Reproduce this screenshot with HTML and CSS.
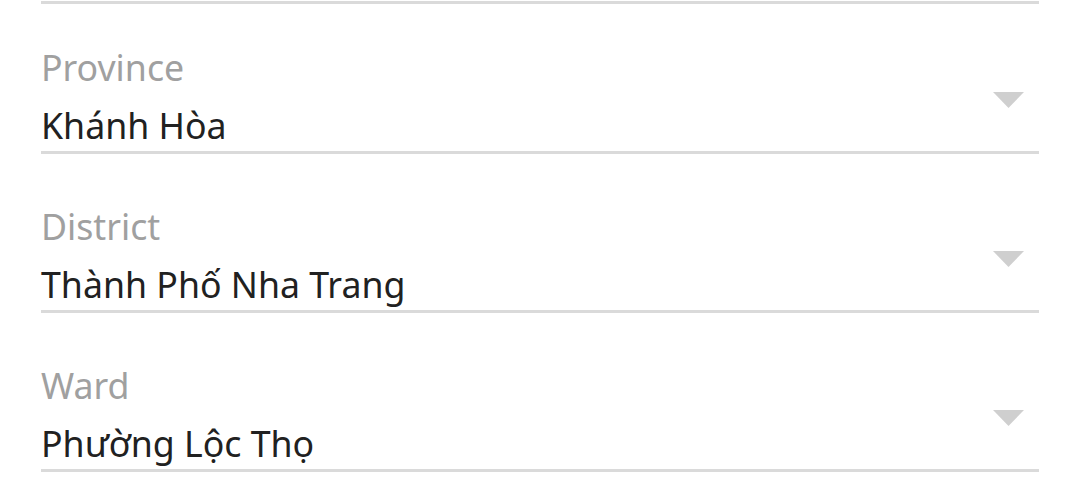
FILE: index.html
```html
<!DOCTYPE html>
<html lang="vi">
<head>
<meta charset="utf-8">
<title>Address</title>
<link rel="stylesheet" href="styles.css">
</head>
<body>
<div class="page">
  <div class="prev-line"></div>
  <div class="field first">
    <div class="texts">
      <div class="label">Province</div>
      <div class="value">Khánh Hòa</div>
    </div>
    <svg class="arrow" width="31" height="16" viewBox="0 0 31 16"><polygon points="0,0 31,0 15.5,16" fill="#cfcfcf"/></svg>
  </div>
  <div class="field">
    <div class="texts">
      <div class="label">District</div>
      <div class="value">Thành Phố Nha Trang</div>
    </div>
    <svg class="arrow" width="31" height="16" viewBox="0 0 31 16"><polygon points="0,0 31,0 15.5,16" fill="#cfcfcf"/></svg>
  </div>
  <div class="field">
    <div class="texts">
      <div class="label">Ward</div>
      <div class="value">Phường Lộc Thọ</div>
    </div>
    <svg class="arrow" width="31" height="16" viewBox="0 0 31 16"><polygon points="0,0 31,0 15.5,16" fill="#cfcfcf"/></svg>
  </div>
</div>
</body>
</html>
```

FILE: styles.css
```css
html, body {
  margin: 0;
  padding: 0;
  background: #ffffff;
}
body {
  font-family: "Noto Sans", "Open Sans", sans-serif;
  overflow: hidden;
}
.page {
  padding: 0 41px;
}
.prev-line {
  margin-top: 1px;
  height: 3px;
  background: #dadada;
}
.field {
  display: flex;
  align-items: flex-end;
  border-bottom: 3px solid #dadada;
  padding-top: 49px;
}
.field.first {
  padding-top: 40px;
}
.texts {
  flex: 1;
  display: flex;
  flex-direction: column;
}
.label {
  font-size: 35.7px;
  line-height: 46px;
  height: 46px;
  color: #a0a0a0;
}
.value {
  font-size: 35.7px;
  line-height: 45px;
  height: 45px;
  padding-bottom: 3px;
  margin-top: 13px;
  color: #212121;
}
.arrow {
  display: block;
  margin: 0 15px 43px 0;
}
```
